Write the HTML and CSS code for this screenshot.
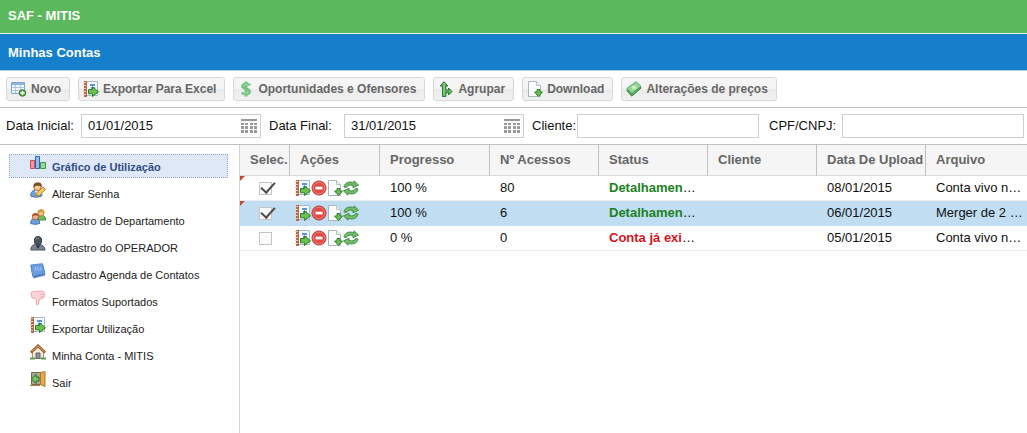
FILE: index.html
```html
<!DOCTYPE html>
<html lang="pt-BR">
<head>
<meta charset="utf-8">
<title>SAF - MITIS</title>
<link rel="stylesheet" href="styles.css">
</head>
<body>
<svg class="sprite" aria-hidden="true">
  <symbol id="i-new" viewBox="0 0 16 16">
    <path d="M.5 1.500h13v11H.5z" fill="#f4f9fe" stroke="#7fa6cf"/>
    <path d="M1 2h12v2H1z" fill="#8db7e2"/>
    <path d="M4.500 4v8M9.500 4v8M1 6.500h12M1 9.500h12" stroke="#a9c6e3" fill="none"/>
    <circle cx="11.500" cy="12" r="3.300" fill="#5ea345" stroke="#3d7c31"/>
    <path d="M11.500 10v4M9.500 12h4" stroke="#fff" stroke-width="1.300"/>
  </symbol>
  <symbol id="i-export" viewBox="0 0 16 16">
    <path d="M3.500 .5h11v14h-11z" fill="#f3f8fd" stroke="#a9bac8"/>
    <path d="M1 0h3v16H1z" fill="#b4694a"/>
    <path d="M0 1h3v1H0zM0 4h3v1H0zM0 7h3v1H0zM0 10h3v1H0zM0 13h3v1H0z" fill="#ecc9b0"/>
    <path d="M7 3h5v2H7zM8 6h4v2H8z" fill="#5c96d2"/>
    <path d="M5.500 8.500h4V5.800l6 5-6 4.700v-2.700h-4z" fill="#6cc04e" stroke="#2f7d2d"/>
  </symbol>
  <symbol id="i-dollar" viewBox="0 0 16 16">
    <path d="M12 4.500C11 3 5 2.200 4.500 5.200 4.200 8 11.800 7.300 11.500 10.600 11.200 13.700 5.500 13.500 4 11.500M8 .5v15" fill="none" stroke="#74c184" stroke-width="2.900"/>
    <path d="M11.300 4.400C10 3.200 5.500 3 5 5.300M11 10.500c-.5 2-4.500 2-6 .8" fill="none" stroke="#a5dfad"/>
  </symbol>
  <symbol id="i-group" viewBox="0 0 16 16">
    <path d="M6 .7 9.800 5H7.800v4h2.700V7l3.500 3.500-3.500 3.500v-2.300H7.800v3.800H4.500V5H2.200z" fill="#5cb55b" stroke="#2c7135"/>
    <path d="M6 2.500v12" stroke="#a1dd8f"/>
  </symbol>
  <symbol id="i-download" viewBox="0 0 16 16">
    <path d="M1.500 .5h8l4 4v11h-12z" fill="#fcfdfd" stroke="#a9b5bb"/>
    <path d="M9.500 .5v4h4" fill="#edf2f4" stroke="#b7c2c7"/>
    <path d="M10 8.500h3V11h2.500l-4 4.500-4-4.500H10z" fill="#6cba52" stroke="#348336"/>
  </symbol>
  <symbol id="i-money" viewBox="0 0 16 16">
    <path d="M.8 9.500 10 2.500l5.200 4.500-9.500 8.200z" fill="#4da35b" stroke="#39864a"/>
    <path d="M.8 7.500 10 .8l5 4.400-9 7.300z" fill="#93d594" stroke="#55ad62"/>
    <ellipse cx="8" cy="6.500" rx="2.500" ry="1.900" fill="#c9edbf"/>
  </symbol>
  <symbol id="i-remove" viewBox="0 0 16 16">
    <circle cx="8" cy="8" r="7" fill="#df4e46" stroke="#bd332e"/>
    <circle cx="8" cy="8" r="5.900" fill="none" stroke="#ea827b"/>
    <path d="M4.500 6.700h7v2.700h-7z" fill="#fff"/>
  </symbol>
  <symbol id="i-refresh" viewBox="0 0 16 16">
    <path d="M1 7C1.500 2.500 7 .8 11 3V.8l4.500 4.300L10 7.700V5.600C7 4.600 4.500 5 3.500 7.500z" fill="#72bd65" stroke="#428f49"/>
    <path d="M15 9c-.5 4.500-6 6.200-10 4v2.200L.5 10.900 6 8.300v2.100c3 1 5.500.6 6.500-1.900z" fill="#72bd65" stroke="#428f49"/>
  </symbol>
  <symbol id="i-calendar" viewBox="0 0 16 16">
    <path d="M0 1h16v2H0zM0 5h3v2H0zM4 5h3v2H4zM9 5h3v2H9zM13 5h3v2h-3zM0 8h3v3H0zM4 8h3v3H4zM9 8h3v3H9zM13 8h3v3h-3zM0 12h3v3H0zM4 12h3v3H4zM9 12h3v3H9zM13 12h3v3h-3z" fill="#999"/>
  </symbol>
  <symbol id="i-chart" viewBox="0 0 16 16">
    <path d="M.5 5.500h4v8h-4z" fill="#f29a9e" stroke="#d4474c"/>
    <path d="M5.500 1.500h4v12h-4z" fill="#8fbdf2" stroke="#2d66ad"/>
    <path d="M10.500 7.500h5v6h-5z" fill="#98d997" stroke="#3d9947"/>
  </symbol>
  <symbol id="i-password" viewBox="0 0 16 16">
    <path d="M.8 14c-.3-4 2-6 5.500-6s6 2 5.500 6c-3 1.500-8 1.500-11 0z" fill="#70a2db" stroke="#416fa9"/>
    <path d="M4.500 8.500 7 12l2.500-3.500z" fill="#fff"/>
    <circle cx="7.500" cy="5" r="3.700" fill="#f3c89b" stroke="#a76c38"/>
    <path d="M3.500 5C3 1 6 .3 8 .5c3 0 4.500 2 3.500 4.500C10 3.500 7 3 3.500 5z" fill="#7d4b25"/>
    <path d="m6 14 1-3.500L13 5l2.500 2.500-6 5.700z" fill="#f6cb62" stroke="#c18527"/>
  </symbol>
  <symbol id="i-people" viewBox="0 0 16 16">
    <path d="M8 11c-.5-3 1-4.500 3.500-4.500s4.500 1.500 4 4.500z" fill="#75b960" stroke="#488b3c"/>
    <circle cx="11" cy="4" r="3" fill="#f0c88c" stroke="#bb8436"/>
    <path d="M7.700 4C7.500 1 9 .3 11 .3s4 1 3.500 3.700C12 2.500 10 2.500 7.700 4z" fill="#cf9c3e"/>
    <path d="M.7 14.500C.5 11 2 9.500 5 9.500s5 1.500 4.600 5c-3 1-6 1-8.900 0z" fill="#6d9fda" stroke="#4170ab"/>
    <circle cx="5.500" cy="7.700" r="3" fill="#efb38b" stroke="#b3623c"/>
    <path d="M2 7.500C2 4.800 3.500 4 5.500 4S9 5.500 8.800 7.500C7 6 4.500 6 2 7.500z" fill="#b15732"/>
  </symbol>
  <symbol id="i-operator" viewBox="0 0 16 16">
    <path d="M.8 14c0-3.500 2-5.500 5-5.500h3c3.500 0 6 2 6.200 5.500z" fill="#7b8591" stroke="#4c5560"/>
    <ellipse cx="8" cy="4.800" rx="3.600" ry="4.200" fill="#4b535e" stroke="#343b44"/>
    <path d="M6 9.500 8 13l2-3.500z" fill="#252a31"/>
    <path d="M6 3.500C6.500 2 8 2 9 2.500" stroke="#929ba6" fill="none"/>
  </symbol>
  <symbol id="i-book" viewBox="0 0 16 16">
    <path d="M1 3.500 12.500 1.500 15 12 3.500 15z" fill="#3f70b8" stroke="#6d92c9"/>
    <path d="M.8 2 12.500.7 14.800 10.500 2.700 13z" fill="#6b9ee0" stroke="#5a8ace"/>
    <path d="m5 4 1 4M7.500 3.800l1 4M10 3.500l1 4" stroke="#a5c5f0"/>
  </symbol>
  <symbol id="i-thumb" viewBox="0 0 16 16">
    <path d="M1 2.500 4 1.500 11 1c3 0 4 2 3.500 4.500-.5 2.500-1.500 3.500-5 3.500l-1 5c-.8 1.500-2.500 1-2.300-.5L6.500 9 2 8z" fill="#fbd5d8" stroke="#eba8af"/>
    <path d="M10.500 4.500h4M10.500 6.700h3.500" stroke="#eeb0b6" fill="none"/>
  </symbol>
  <symbol id="i-home" viewBox="0 0 16 16">
    <path d="M2.500 7.500 8 3l5.500 4.500v7h-11z" fill="#f5ead8" stroke="#a59079"/>
    <path d="M6 9h4v5.500H6z" fill="#8795a9" stroke="#6e6157"/>
    <path d="M.8 8.500 8 1.700l7.200 6.800" fill="none" stroke="#955c2c" stroke-width="2.600"/>
    <path d="M1.300 8 8 1.900 14.700 8" fill="none" stroke="#e1a45d"/>
    <path d="M0 14.500h5M11 14.500h5" stroke="#5d9b50" stroke-width="2"/>
  </symbol>
  <symbol id="i-exit" viewBox="0 0 16 16">
    <path d="M1.500 1.500h10v12h-10z" fill="#a5a790" stroke="#77694f"/>
    <path d="M10.500 1.500 15 .5v15l-4.500-2z" fill="#e9a850" stroke="#b5752a"/>
    <path d="M9 6H6V3.500L1.500 8 6 12.500V10h3z" fill="#79c75d" stroke="#286f2c"/>
    <path d="M0 14.500h10" stroke="#a87b43"/>
  </symbol>
</svg>

<header class="app-title">SAF - MITIS</header>
<h1 class="page-title">Minhas Contas</h1>

<div class="toolbar">
  <button class="btn" type="button"><svg class="icon"><use href="#i-new"/></svg>Novo</button>
  <button class="btn" type="button"><svg class="icon"><use href="#i-export"/></svg>Exportar Para Excel</button>
  <button class="btn" type="button"><svg class="icon"><use href="#i-dollar"/></svg>Oportunidades e Ofensores</button>
  <button class="btn" type="button"><svg class="icon"><use href="#i-group"/></svg>Agrupar</button>
  <button class="btn" type="button"><svg class="icon"><use href="#i-download"/></svg>Download</button>
  <button class="btn" type="button"><svg class="icon"><use href="#i-money"/></svg>Alterações de preços</button>
</div>

<form class="filters">
  <label class="label label-date" for="start">Data Inicial:</label>
  <div class="box date"><input class="input" id="start" type="text" value="01/01/2015"><svg class="icon"><use href="#i-calendar"/></svg></div>
  <label class="label label-date next" for="end">Data Final:</label>
  <div class="box date"><input class="input" id="end" type="text" value="31/01/2015"><svg class="icon"><use href="#i-calendar"/></svg></div>
  <label class="label label-client next" for="client">Cliente:</label>
  <div class="box"><input class="input" id="client" type="text"></div>
  <label class="label label-doc next" for="doc">CPF/CNPJ:</label>
  <div class="box"><input class="input" id="doc" type="text"></div>
</form>

<div class="content">
  <nav class="menu">
    <a class="item active" href="#"><svg class="icon"><use href="#i-chart"/></svg><span class="text">Gráfico de Utilização</span></a>
    <a class="item" href="#"><svg class="icon"><use href="#i-password"/></svg><span class="text">Alterar Senha</span></a>
    <a class="item" href="#"><svg class="icon"><use href="#i-people"/></svg><span class="text">Cadastro de Departamento</span></a>
    <a class="item" href="#"><svg class="icon"><use href="#i-operator"/></svg><span class="text">Cadastro do OPERADOR</span></a>
    <a class="item" href="#"><svg class="icon"><use href="#i-book"/></svg><span class="text">Cadastro Agenda de Contatos</span></a>
    <a class="item" href="#"><svg class="icon"><use href="#i-thumb"/></svg><span class="text">Formatos Suportados</span></a>
    <a class="item" href="#"><svg class="icon"><use href="#i-export"/></svg><span class="text">Exportar Utilização</span></a>
    <a class="item" href="#"><svg class="icon"><use href="#i-home"/></svg><span class="text">Minha Conta - MITIS</span></a>
    <a class="item" href="#"><svg class="icon"><use href="#i-exit"/></svg><span class="text">Sair</span></a>
  </nav>
  <main class="grid-panel">
    <table class="grid">
      <colgroup>
        <col class="col-select"><col class="col-actions"><col class="col-progress"><col class="col-data"><col class="col-data"><col class="col-data"><col class="col-data"><col>
      </colgroup>
      <thead>
        <tr><th>Selec.</th><th>Ações</th><th>Progresso</th><th>Nº Acessos</th><th>Status</th><th>Cliente</th><th>Data De Upload</th><th>Arquivo</th></tr>
      </thead>
      <tbody>
        <tr>
          <td class="select changed"><input class="check" type="checkbox" aria-label="Selecionar conta 1" checked></td>
          <td class="actions"><div class="icons"><svg class="icon"><use href="#i-export"/></svg><svg class="icon"><use href="#i-remove"/></svg><svg class="icon"><use href="#i-download"/></svg><svg class="icon"><use href="#i-refresh"/></svg></div></td>
          <td>100 %</td><td>80</td><td class="done"><b>Detalhamen</b>…</td><td></td><td>08/01/2015</td><td>Conta vivo n…</td>
        </tr>
        <tr class="selected">
          <td class="select changed"><input class="check" type="checkbox" aria-label="Selecionar conta 2" checked></td>
          <td class="actions"><div class="icons"><svg class="icon"><use href="#i-export"/></svg><svg class="icon"><use href="#i-remove"/></svg><svg class="icon"><use href="#i-download"/></svg><svg class="icon"><use href="#i-refresh"/></svg></div></td>
          <td>100 %</td><td>6</td><td class="done"><b>Detalhamen</b>…</td><td></td><td>06/01/2015</td><td>Merger de 2 …</td>
        </tr>
        <tr>
          <td class="select"><input class="check" type="checkbox" aria-label="Selecionar conta 3"></td>
          <td class="actions"><div class="icons"><svg class="icon"><use href="#i-export"/></svg><svg class="icon"><use href="#i-remove"/></svg><svg class="icon"><use href="#i-download"/></svg><svg class="icon"><use href="#i-refresh"/></svg></div></td>
          <td>0 %</td><td>0</td><td class="error"><b>Conta já exi</b>…</td><td></td><td>05/01/2015</td><td>Conta vivo n…</td>
        </tr>
      </tbody>
    </table>
  </main>
</div>
</body>
</html>
```
FILE: styles.css
```css
* { box-sizing: border-box; }

body {
  margin: 0;
  min-height: 100vh;
  display: flex;
  flex-direction: column;
  background: #fff;
  color: #111;
  font: 13px/16px "Liberation Sans", Arial, sans-serif;
}

.sprite { display: none; }
.icon { width: 16px; height: 16px; flex: none; }

.app-title,
.page-title {
  margin: 0;
  padding: 8px;
  color: #fff;
  font-size: 13px;
  font-weight: bold;
  line-height: 16px;
}
.app-title { background: #5cb85c; padding-bottom: 9px; border-bottom: 1px solid #e4f2e8; }
.page-title { background: #157fcc; padding: 11px 8px 9px; border-bottom: 1px solid #b5d3ea; }

.toolbar {
  display: flex;
  gap: 8px;
  padding: 6px;
  border-bottom: 1px solid #c0c0c0;
}
.btn {
  display: flex;
  align-items: center;
  gap: 4px;
  height: 24px;
  padding: 0 8px 0 4px;
  border: 1px solid #d8d8d8;
  border-radius: 3px;
  background: linear-gradient(#f6f6f6, #f4f4f4 50%, #ebebeb 50%, #f0f0f0);
  color: #666;
  font: bold 12px/16px "Liberation Sans", Arial, sans-serif;
  white-space: nowrap;
}

.filters {
  display: flex;
  align-items: center;
  padding: 6px 3px 6px 6px;
  border-bottom: 1px solid #c0c0c0;
}
.label { flex: none; }
.label-date { width: 75px; }
.label-client { width: 45px; }
.label-doc { width: 75px; padding-left: 2px; }
.next { margin-left: 8px; }
.box {
  display: flex;
  align-items: center;
  flex: 1 1 0;
  min-width: 0;
  height: 24px;
  padding-right: 3px;
  border: 1px solid #cfcfcf;
  background: #fff;
}
.date { flex: 0 1 180px; }
.input {
  flex: 1;
  width: 0;
  min-width: 0;
  padding: 0 6px;
  border: 0;
  outline: 0;
  background: none;
  color: #111;
  font: inherit;
}

.content { display: flex; flex: 1; }
.menu {
  display: flex;
  flex-direction: column;
  gap: 3px;
  flex: none;
  width: 240px;
  padding: 9px 11px 9px 9px;
  border-right: 1px solid #d4d4d4;
}
.item {
  display: flex;
  gap: 6px;
  height: 24px;
  padding: 0 20px;
  border: 1px solid transparent;
  color: #222;
  font-size: 11px;
  text-decoration: none;
  white-space: nowrap;
}
.item .text { padding-top: 4px; }
.active {
  border: 1px dotted #98a9cc;
  background: #dfe8f6;
  color: #2f4f85;
  font-weight: bold;
}

.grid-panel { flex: 1; min-width: 0; }
.grid {
  width: 100%;
  table-layout: fixed;
  border-collapse: separate;
  border-spacing: 0;
}
.col-select { width: 50px; }
.col-actions { width: 90px; }
.col-progress { width: 110px; }
.col-data { width: 109px; }
.grid th,
.grid td {
  padding: 0 0 0 10px;
  overflow: hidden;
  text-align: left;
  white-space: nowrap;
}
.grid th {
  height: 31px;
  border-right: 1px solid #c0c0c0;
  border-bottom: 1px solid #d8d8d8;
  background: #f5f5f5;
  color: #666;
}
.grid th:last-child { border-right: 0; }
.grid td { height: 25px; border-bottom: 1px solid #ededed; }
.grid .selected td { background: #c1ddf1; border-color: #c1ddf1; }
.grid .select { padding-left: 19px; }
.grid .actions { padding-left: 5px; }
.changed { background: linear-gradient(135deg, #c8452f 3px, transparent 4px); }
.grid .selected .changed { background: linear-gradient(135deg, #c8452f 3px, #c1ddf1 4px); }
.icons { display: flex; }

.check {
  appearance: none;
  display: flow-root;
  width: 13px;
  height: 13px;
  margin: 0;
  border: 1px solid #c4c4c4;
  background: #fafafa;
}
.check:checked::after {
  content: "";
  display: block;
  width: 6px;
  height: 12px;
  margin: -4px 0 0 4px;
  border: solid #4a4a4a;
  border-width: 0 2px 2px 0;
  transform: rotate(42deg);
}
.done b { color: #1c821c; }
.error b { color: #d4141c; }
```
